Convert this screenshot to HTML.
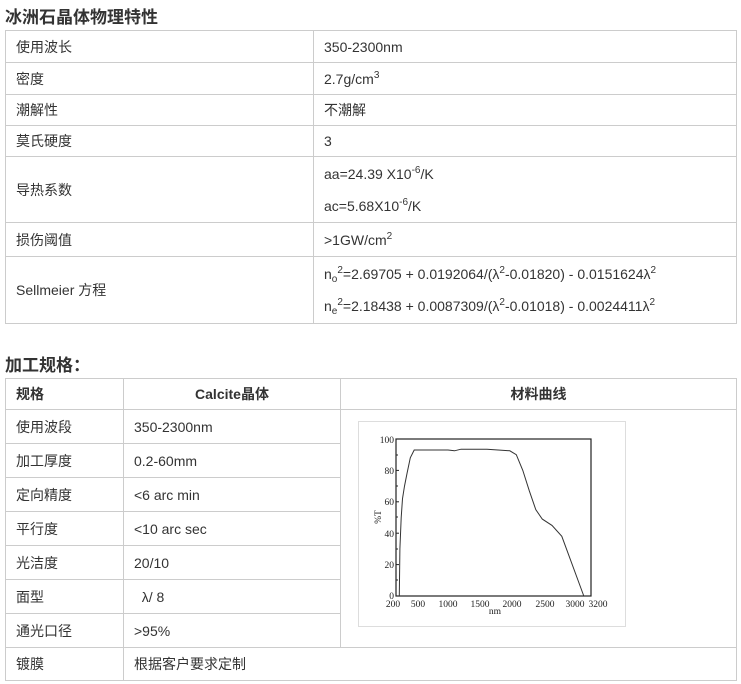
<!DOCTYPE html>
<html><head><meta charset="utf-8"><style>
body{margin:0;background:#fff;width:741px;height:684px;position:relative;overflow:hidden;font-family:"Liberation Sans","Noto Sans CJK SC",sans-serif;color:#333;font-size:14px}
.t{position:absolute;font-weight:bold;font-size:17px;color:#333}
table{position:absolute;border-collapse:collapse;table-layout:fixed}
td{border:1px solid #ccc;padding:0 0 0 10px;vertical-align:middle;white-space:nowrap}
sup{font-size:10px;vertical-align:6px;line-height:0}
sub{font-size:10px;vertical-align:-3px;line-height:0}
.l{line-height:32px}
</style></head><body>
<div class="t" style="left:5px;top:3px">冰洲石晶体物理特性</div>
<table style="left:5px;top:30px;width:732px">
<col style="width:308px"><col>
<tr style="height:32px"><td>使用波长</td><td>350-2300nm</td></tr>
<tr style="height:32px"><td>密度</td><td>2.7g/cm<sup>3</sup></td></tr>
<tr style="height:31px"><td>潮解性</td><td>不潮解</td></tr>
<tr style="height:31px"><td>莫氏硬度</td><td>3</td></tr>
<tr style="height:66px"><td>导热系数</td><td><div class="l">aa=24.39 X10<sup>-6</sup>/K</div><div class="l">ac=5.68X10<sup>-6</sup>/K</div></td></tr>
<tr style="height:34px"><td>损伤阈值</td><td>&gt;1GW/cm<sup>2</sup></td></tr>
<tr style="height:67px"><td>Sellmeier 方程</td><td><div class="l">n<sub>o</sub><sup>2</sup>=2.69705 + 0.0192064/(λ<sup>2</sup>-0.01820) - 0.0151624λ<sup>2</sup></div><div class="l">n<sub>e</sub><sup>2</sup>=2.18438 + 0.0087309/(λ<sup>2</sup>-0.01018) - 0.0024411λ<sup>2</sup></div></td></tr>
</table>
<div class="t" style="left:5px;top:351px">加工规格：</div>
<table style="left:5px;top:378px;width:732px">
<col style="width:118px"><col style="width:217px"><col>
<tr style="height:31px;font-weight:bold"><td>规格</td><td style="text-align:center;padding:0">Calcite晶体</td><td style="text-align:center;padding:0">材料曲线</td></tr>
<tr style="height:34px"><td>使用波段</td><td>350-2300nm</td><td rowspan="7"></td></tr>
<tr style="height:34px"><td>加工厚度</td><td>0.2-60mm</td></tr>
<tr style="height:34px"><td>定向精度</td><td>&lt;6 arc min</td></tr>
<tr style="height:34px"><td>平行度</td><td>&lt;10 arc sec</td></tr>
<tr style="height:34px"><td>光洁度</td><td>20/10</td></tr>
<tr style="height:34px"><td>面型</td><td>&nbsp; λ/ 8</td></tr>
<tr style="height:34px"><td>通光口径</td><td>&gt;95%</td></tr>
<tr style="height:33px"><td>镀膜</td><td colspan="2">根据客户要求定制</td></tr>
</table>
<svg style="position:absolute;left:0;top:0" width="741" height="684">
<rect x="358.5" y="421.5" width="267" height="205" fill="#fff" stroke="#ddd"/>
<rect x="396" y="439" width="195" height="157" fill="none" stroke="#222" stroke-width="1.2"/>
<g stroke="#222" stroke-width="1">
<line x1="396" y1="564.6" x2="399" y2="564.6"/><line x1="396" y1="533.2" x2="399" y2="533.2"/><line x1="396" y1="501.8" x2="399" y2="501.8"/><line x1="396" y1="470.4" x2="399" y2="470.4"/>
<line x1="396" y1="580" x2="398" y2="580"/><line x1="396" y1="549" x2="398" y2="549"/><line x1="396" y1="517" x2="398" y2="517"/><line x1="396" y1="486" x2="398" y2="486"/><line x1="396" y1="455" x2="398" y2="455"/>
</g>
<polyline fill="none" stroke="#333" stroke-width="1" points="399.3,596 399.9,548.9 401.2,517.5 402.5,498.7 404.5,486.1 407,473.5 410.3,457.8 414.2,450 448,450 454.5,450.8 461,449.2 487,449.2 509.8,450.8 516.3,454.7 522.8,470.4 529.3,490.8 535.8,509.7 542.3,519.1 552,525.4 561.8,536.3 583.8,596"/>
<g font-family="Liberation Serif,serif" font-size="9.5" fill="#222" text-anchor="end">
<text x="394" y="443">100</text><text x="394" y="474">80</text><text x="394" y="505">60</text><text x="394" y="537">40</text><text x="394" y="568">20</text><text x="394" y="599">0</text>
</g>
<g font-family="Liberation Serif,serif" font-size="9.5" fill="#222" text-anchor="middle">
<text x="393" y="607">200</text><text x="418" y="607">500</text><text x="448" y="607">1000</text><text x="480" y="607">1500</text><text x="512" y="607">2000</text><text x="545" y="607">2500</text><text x="575" y="607">3000</text><text x="598" y="607">3200</text>
<text x="495" y="614">nm</text>
<text transform="translate(381,517) rotate(-90)">%T</text>
</g>
</svg>
</body></html>
